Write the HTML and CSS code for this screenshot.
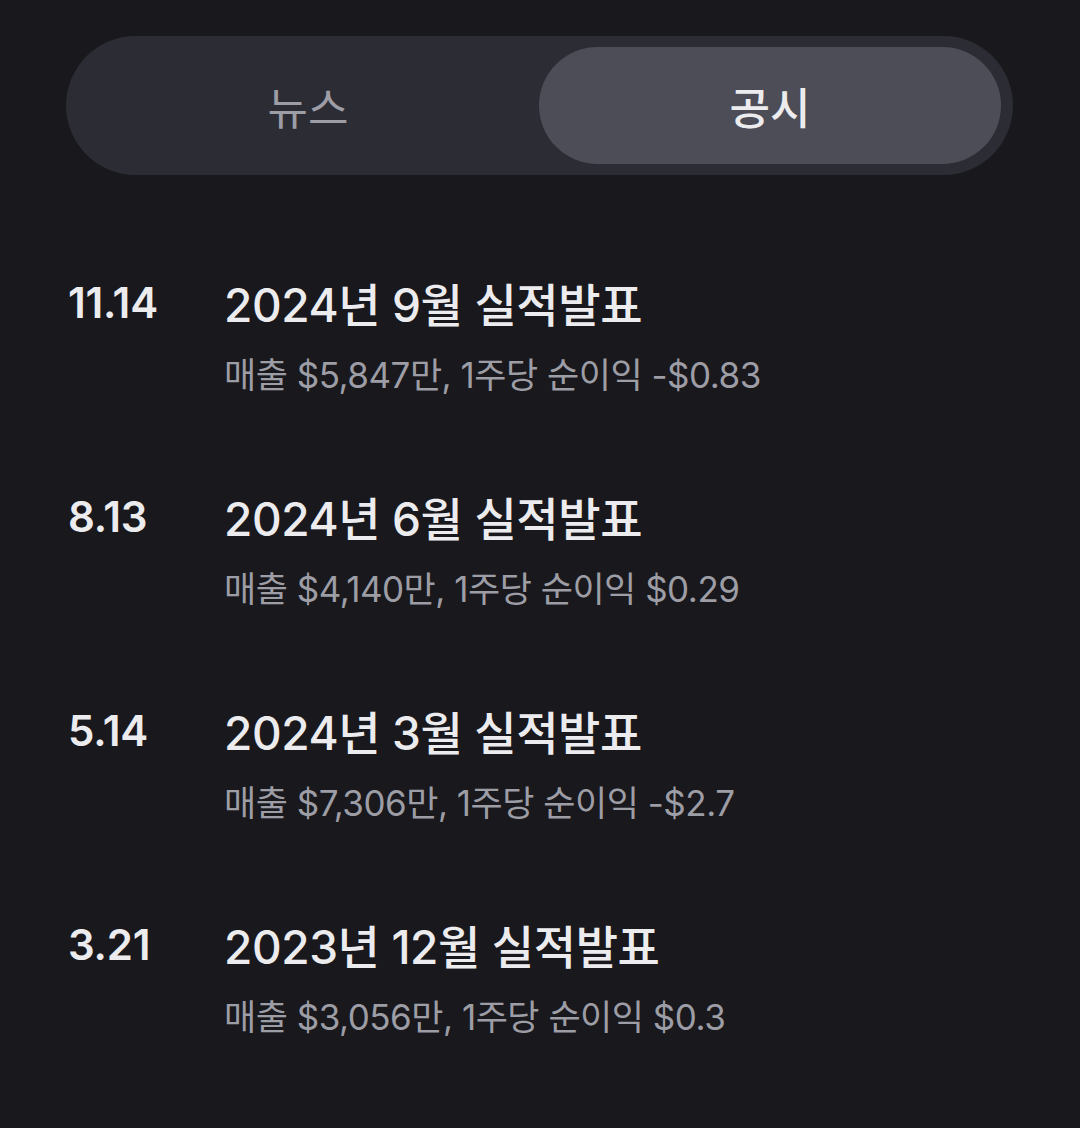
FILE: index.html
```html
<!DOCTYPE html>
<html lang="ko">
  <head>
    <meta charset="UTF-8" />
    <title>공시</title>
    <meta name="viewport" content="width=device-width, initial-scale=1.0" />
    <link rel="stylesheet" href="styles.css">
  </head>
  <body>
    <div class="tabs">
      <button class="tab">뉴스</button>
      <button class="tab active">공시</button>
    </div>

    <ul class="filings">
      <li class="filing">
        <div class="date">11.14</div>
        <div class="info">
          <div class="title">2024년 9월 실적발표</div>
          <div class="desc">매출 $5,847만, 1주당 순이익 -$0.83</div>
        </div>
      </li>
      <li class="filing">
        <div class="date">8.13</div>
        <div class="info">
          <div class="title">2024년 6월 실적발표</div>
          <div class="desc">매출 $4,140만, 1주당 순이익 $0.29</div>
        </div>
      </li>
      <li class="filing">
        <div class="date">5.14</div>
        <div class="info">
          <div class="title">2024년 3월 실적발표</div>
          <div class="desc">매출 $7,306만, 1주당 순이익 -$2.7</div>
        </div>
      </li>
      <li class="filing">
        <div class="date">3.21</div>
        <div class="info">
          <div class="title">2023년 12월 실적발표</div>
          <div class="desc">매출 $3,056만, 1주당 순이익 $0.3</div>
        </div>
      </li>
    </ul>
  </body>
</html>
```

FILE: styles.css
```css
:root {
  --bg: #18181d;
  --tab-bg: #2c2c34;
  --tab-active: #4d4d58;
  --text: #ececef;
  --sub: #9d9da5;
}

body {
  margin: 0;
  background-color: var(--bg);
  color: var(--text);
  font-family: Inter, "Noto Sans CJK KR", sans-serif;
}

.tabs {
  display: grid;
  grid-template-columns: 1fr 1fr;
  margin: 36px 67px 0 66px;
  padding: 11px 12px 11px 11px;
  background: var(--tab-bg);
  border-radius: 70px;
}

.tab {
  height: 117px;
  border: none;
  border-radius: 59px;
  background: transparent;
  color: var(--sub);
  font-family: inherit;
  font-size: 44px;
  font-weight: 400;
}

.tab.active {
  background: var(--tab-active);
  color: var(--text);
  font-weight: 500;
}

.filings {
  list-style: none;
  margin: 100px 0 0;
  padding: 0 0 0 68px;
}

.filing {
  display: flex;
  height: 214px;
}

.date {
  width: 156px;
  font-size: 42px;
  font-weight: 600;
  line-height: 56px;
  letter-spacing: -0.2px;
}

.title {
  font-size: 46px;
  font-weight: 500;
  line-height: 60px;
  letter-spacing: -0.4px;
}

.desc {
  margin-top: 16px;
  font-size: 35px;
  line-height: 48px;
  color: var(--sub);
  letter-spacing: -0.5px;
}
```
